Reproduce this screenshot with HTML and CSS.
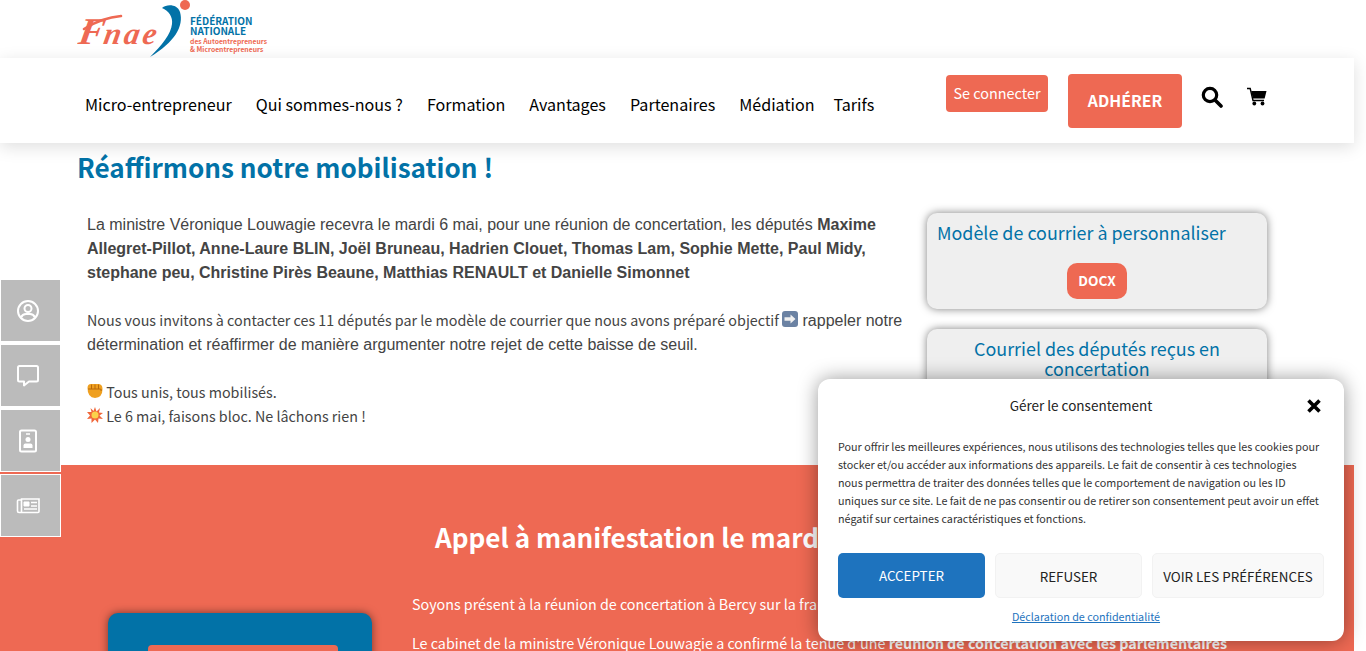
FILE: index.html
```html
<!DOCTYPE html>
<html lang="fr">
<head>
    <meta charset="UTF-8">
    <meta name="viewport" content="width=device-width, initial-scale=1.0">
    <title>Réaffirmons notre mobilisation !</title>
    <link rel="stylesheet" href="styles.css">
</head>
<body>
    <div class="page">
        <div class="logo-row">
            <svg class="logo" width="192" height="58" viewBox="0 0 192 58">
                <path d="M85 8 C90 4 100 4 103 12 C107 26 98 42 73 57 C85 45 94 34 95 24 C96 17 92 11 85 8 Z" fill="#0272a7"/>
                <circle cx="108" cy="5" r="5" fill="#ee6953"/>
                <path d="M7 29 C18 22 32 17 44 16" fill="none" stroke="#ee6953" stroke-width="2.6" stroke-linecap="round"/>
                <text class="logo-script" x="0" y="44" transform="translate(8 0) skewX(-10)">F<tspan class="logo-script-small">nae</tspan></text>
                <text class="logo-title" x="113" y="25">FÉDÉRATION</text>
                <text class="logo-title" x="113" y="35">NATIONALE</text>
                <text class="logo-sub" x="113" y="44">des Autoentrepreneurs</text>
                <text class="logo-sub" x="113" y="52">&amp; Microentrepreneurs</text>
            </svg>
        </div>

        <header class="header">
            <nav class="nav">
                <a>Micro-entrepreneur</a>
                <a>Qui sommes-nous ?</a>
                <a>Formation</a>
                <a>Avantages</a>
                <a>Partenaires</a>
                <a class="nav-tight">Médiation</a>
                <a>Tarifs</a>
            </nav>
            <a class="btn-login">Se connecter</a>
            <a class="btn-join">ADHÉRER</a>
            <svg class="icon-search" width="22" height="22" viewBox="0 0 22 22">
                <circle cx="9" cy="9" r="6.7" fill="none" stroke="#000" stroke-width="3.2"/>
                <path d="M14 14 L20 20" stroke="#000" stroke-width="3.6" stroke-linecap="round"/>
            </svg>
            <svg class="icon-cart" width="20" height="20" viewBox="0 0 20 20">
                <path d="M0 1.5 H3.2 L6 13.5 H17" fill="none" stroke="#000" stroke-width="1.4"/>
                <path d="M4.2 4 H19.5 L17.6 11.5 H5.8 Z" fill="#000"/>
                <circle cx="7.3" cy="16.5" r="1.9" fill="#000"/>
                <circle cx="15.5" cy="16.5" r="1.9" fill="#000"/>
            </svg>
        </header>

        <main class="intro">
            <h1>Réaffirmons notre mobilisation !</h1>
            <div class="intro-cols">
                <div class="intro-text">
                    <p>La ministre Véronique Louwagie recevra le mardi 6 mai, pour une réunion de concertation, les députés <b>Maxime Allegret-Pillot, Anne-Laure BLIN, Joël Bruneau, Hadrien Clouet, Thomas Lam, Sophie Mette, Paul Midy, stephane peu, Christine Pirès Beaune, Matthias RENAULT et Danielle Simonnet</b></p>
                    <p class="gap-top"><span class="source">Nous vous invitons à contacter ces 11 députés par le modèle de courrier que nous avons préparé objectif </span><svg class="emoji" width="16" height="16" viewBox="0 0 16 16"><rect width="16" height="16" rx="3" fill="#6b82a3"/><path d="M2.5 6.3 H8.5 V3.500 L13.5 8 L8.5 12.500 V9.700 H2.5 Z" fill="#f0f0f0"/></svg> rappeler notre détermination et réaffirmer de manière argumenter notre rejet de cette baisse de seuil.</p>
                    <p class="gap-top"><svg class="emoji" width="16" height="16" viewBox="0 0 16 16"><path d="M0.500 5 Q0.500 1 4 1 H11 Q15.500 1 15.500 6 Q15.500 14.500 8 15 Q0.500 14.500 0.500 5 Z" fill="#efa020"/><path d="M1 6 H13 Q15 6 14 8 M4.500 1.500 V6 M8 1.500 V6 M11.500 1.500 V6" stroke="#b8690c" stroke-width="1" fill="none"/></svg><span class="source"> Tous unis, tous mobilisés.</span><br>
                    <svg class="emoji" width="16" height="16" viewBox="0 0 16 16"><path d="M8 0 L9.500 4.500 L13 1 L12 5.500 L16 6 L12.500 8.500 L16 12 L11.500 11.500 L11 16 L8 12.500 L4.500 16 L4.500 11.500 L0 12 L3 8.500 L0 5 L4.500 5 L3.500 1 L6.500 4 Z" fill="#f0673a"/><circle cx="8" cy="8" r="3.500" fill="#fbd24b"/></svg><span class="source"> Le 6 mai, faisons bloc. Ne lâchons rien !</span></p>
                </div>
                <aside class="side">
                    <div class="card">
                        <h3 class="card-title-left">Modèle de courrier à personnaliser</h3>
                        <a class="btn-docx">DOCX</a>
                    </div>
                    <div class="card card-tall">
                        <h3>Courriel des députés reçus en concertation</h3>
                    </div>
                </aside>
            </div>
        </main>

        <section class="band">
            <h2>Appel à manifestation le mardi 6 mai</h2>
            <div class="band-cols">
                <div class="band-card"><div class="band-card-btn"></div></div>
                <div class="band-text">
                    <p>Soyons présent à la réunion de concertation à Bercy sur la franchise de TVA</p>
                    <p>Le cabinet de la ministre Véronique Louwagie a confirmé la tenue d'une <b>réunion de concertation avec les parlementaires</b></p>
                </div>
            </div>
        </section>

        <div class="side-tabs">
            <a class="tab"><svg width="24" height="24" viewBox="0 0 24 24" fill="none" stroke="#fff" stroke-width="2"><circle cx="12" cy="12" r="10"/><circle cx="12" cy="9.500" r="3.500"/><path d="M5 18.500 Q6.500 15 10 15 H14 Q17.500 15 19 18.500"/></svg></a>
            <a class="tab"><svg width="24" height="24" viewBox="0 0 24 24" fill="none" stroke="#fff" stroke-width="2" stroke-linejoin="round"><path d="M3.500 2 H20.500 Q22 2 22 3.500 V16 Q22 17.500 20.500 17.500 H13 L8 21.500 V17.500 H3.500 Q2 17.500 2 16 V3.500 Q2 2 3.500 2 Z"/></svg></a>
            <a class="tab"><svg width="24" height="24" viewBox="0 0 24 24"><rect x="4" y="1.500" width="16" height="21" rx="1.500" fill="none" stroke="#fff" stroke-width="2"/><path d="M10 5 H14" stroke="#fff" stroke-width="1.500"/><circle cx="12" cy="10.500" r="2.500" fill="#fff"/><path d="M7.500 19 V16.500 Q7.500 14.500 9.500 14.500 H14.500 Q16.500 14.500 16.500 16.500 V19 Z" fill="#fff"/></svg></a>
            <a class="tab tab-active"><svg width="24" height="24" viewBox="0 0 24 24" fill="none" stroke="#fff"><path d="M5 6 H2.500 Q1.500 6 1.500 7 V17 Q1.500 18.500 3 18.500 H22 Q23 18.500 23 17.500 V5 H5.500 V18" stroke-width="1.600"/><path d="M8 8 H13 V12 H8 Z" fill="#fff" stroke-width="1"/><path d="M15 8.500 H21 M15 12 H21 M8 15 H21" stroke-width="1.500"/></svg></a>
        </div>

        <div class="consent">
            <div class="consent-head">
                <span class="consent-title">Gérer le consentement</span>
                <svg class="consent-close" width="16" height="16" viewBox="0 0 16 16"><path d="M2.500 2.500 L13.500 13.500 M13.500 2.500 L2.500 13.500" stroke="#000" stroke-width="3.600"/></svg>
            </div>
            <p class="consent-text">Pour offrir les meilleures expériences, nous utilisons des technologies telles que les cookies pour stocker et/ou accéder aux informations des appareils. Le fait de consentir à ces technologies nous permettra de traiter des données telles que le comportement de navigation ou les ID uniques sur ce site. Le fait de ne pas consentir ou de retirer son consentement peut avoir un effet négatif sur certaines caractéristiques et fonctions.</p>
            <div class="consent-btns">
                <a class="cbtn cbtn-accept">ACCEPTER</a>
                <a class="cbtn cbtn-refuse">REFUSER</a>
                <a class="cbtn cbtn-prefs">VOIR LES PRÉFÉRENCES</a>
            </div>
            <a class="consent-link">Déclaration de confidentialité</a>
        </div>
    </div>
</body>
</html>
```

FILE: styles.css
```css
* {
    box-sizing: border-box;
}
html, body {
    margin: 0;
    height: 651px;
    overflow: hidden;
}
body {
    font-family: "Noto Sans CJK SC", "Noto Sans", sans-serif;
    background-color: #ffffff;
    color: #444;
}
.page {
    position: relative;
    height: 651px;
    overflow: hidden;
}
.logo-row {
    height: 58px;
    padding-left: 77px;
}
.logo {
    display: block;
}
.logo-script {
    font-family: "Liberation Serif", serif;
    font-style: italic;
    font-weight: 700;
    font-size: 38px;
    fill: #ee6953;
}
.logo-script-small {
    font-size: 31px;
    letter-spacing: 3px;
}
.logo-title {
    font-family: "Noto Sans CJK SC", sans-serif;
    font-weight: 700;
    font-size: 10px;
    fill: #0272a7;
}
.logo-sub {
    font-family: "Noto Sans CJK SC", sans-serif;
    font-weight: 700;
    font-size: 6.8px;
    fill: #ee6953;
}
.header {
    width: 1354px;
    height: 85px;
    background-color: #fff;
    box-shadow: 0 4px 16px rgba(0, 0, 0, 0.13);
    display: flex;
    align-items: flex-start;
    padding-left: 85px;
    position: relative;
}
.nav {
    display: flex;
    gap: 24px;
    padding-top: 34px;
    width: 861px;
    font-size: 16.1px;
    line-height: 24px;
    color: #000;
    white-space: nowrap;
}
.nav-tight {
    margin-right: -5px;
}
.btn-login {
    margin-top: 17px;
    width: 102px;
    height: 37px;
    background-color: #ee6953;
    color: #fff;
    border-radius: 4px;
    font-size: 14.4px;
    line-height: 35px;
    text-align: center;
}
.btn-join {
    margin-top: 16px;
    margin-left: 20px;
    width: 114px;
    height: 54px;
    background-color: #ee6953;
    color: #fff;
    border-radius: 4px;
    font-size: 15.8px;
    font-weight: 600;
    line-height: 54px;
    text-align: center;
}
.icon-search {
    margin-top: 28px;
    margin-left: 19px;
}
.icon-cart {
    margin-top: 29px;
    margin-left: 24px;
}
.intro {
    height: 322px;
    padding-left: 77px;
}
.intro h1 {
    margin: 0;
    padding-top: 6px;
    font-size: 26.1px;
    line-height: 36px;
    font-weight: 600;
    color: #0272a7;
}
.intro-cols {
    display: flex;
    padding-top: 28px;
}
.intro-text {
    width: 850px;
    padding: 0 0 0 10px;
    font-family: "Liberation Sans", Arial, sans-serif;
    font-size: 16px;
    line-height: 24px;
}
.intro-text p {
    margin: 0;
}
.gap-top {
    margin-top: 24px !important;
}
.source {
    font-family: "Noto Sans CJK SC", sans-serif;
    font-size: 14.32px;
    line-height: 1;
}
.emoji {
    vertical-align: -1px;
}
.side {
    width: 340px;
    display: flex;
    flex-direction: column;
    gap: 20px;
}
.card {
    width: 340px;
    height: 96px;
    background-color: #efefef;
    border-radius: 10px;
    box-shadow: 0 0 8px rgba(0, 0, 0, 0.5);
    padding: 9px 10px 10px;
    text-align: center;
}
.card-tall {
    height: 120px;
}
.card h3 {
    margin: 0;
    font-size: 17.9px;
    line-height: 20px;
    font-weight: 400;
    color: #0272a7;
}
.card-title-left {
    text-align: left;
}
.btn-docx {
    display: inline-block;
    margin-top: 21px;
    width: 60px;
    height: 36px;
    background-color: #ee6953;
    color: #fff;
    border-radius: 10px;
    font-size: 13.6px;
    font-weight: 700;
    line-height: 35px;
}
.band {
    width: 1354px;
    height: 186px;
    background-color: #ee6953;
    color: #fff;
}
.band h2 {
    margin: 0;
    padding: 54px 0 0 435px;
    font-size: 26.1px;
    line-height: 36px;
    font-weight: 600;
    white-space: nowrap;
}
.band-cols {
    display: flex;
    padding: 37px 0 0 108px;
}
.band-card {
    margin-top: 21px;
    width: 264px;
    height: 120px;
    padding: 32px 34px 0 40px;
    background-color: #0272a7;
    border-radius: 10px;
    box-shadow: 0 0 8px rgba(0, 0, 0, 0.5);
}
.band-card-btn {
    height: 40px;
    background-color: #ee6953;
    border-radius: 4px;
}
.band-text {
    margin-left: 40px;
    font-size: 14.32px;
    line-height: 24px;
    white-space: nowrap;
}
.band-text p {
    margin: 0 0 15px;
}
.band-text b {
    font-weight: 600;
}
.side-tabs {
    position: absolute;
    left: 0;
    top: 279px;
    display: flex;
    flex-direction: column;
    gap: 2px;
}
.tab {
    width: 61px;
    height: 63px;
    padding-right: 5px;
    background-color: #bbbbbb;
    border: 1px solid #fff;
    display: flex;
    align-items: center;
    justify-content: center;
}
.consent {
    position: absolute;
    left: 818px;
    top: 379px;
    width: 526px;
    height: 262px;
    background-color: #fff;
    border-radius: 12px;
    box-shadow: 0 0 20px rgba(0, 0, 0, 0.4);
    padding: 0 20px;
    color: #222;
}
.consent-head {
    height: 53px;
    display: flex;
    align-items: center;
    justify-content: center;
    position: relative;
}
.consent-title {
    font-size: 13.5px;
    line-height: 53px;
}
.consent-close {
    position: absolute;
    right: 2px;
    top: 19px;
}
.consent-text {
    margin: 6px 0 0;
    padding-right: 4px;
    font-size: 10.77px;
    line-height: 18px;
    color: #333;
}
.consent-btns {
    display: flex;
    gap: 10px;
    margin-top: 25px;
}
.cbtn {
    height: 45px;
    border-radius: 5px;
    font-size: 13.4px;
    line-height: 45px;
    text-align: center;
    white-space: nowrap;
}
.cbtn-accept {
    width: 147px;
    background-color: #1e73be;
    color: #fff;
}
.cbtn-refuse {
    width: 147px;
    background-color: #f9f9f9;
    border: 1px solid #f2f2f2;
    color: #222;
}
.cbtn-prefs {
    width: 172px;
    background-color: #f9f9f9;
    border: 1px solid #f2f2f2;
    color: #222;
}
.consent-link {
    display: block;
    margin-top: 10px;
    padding-left: 10px;
    font-size: 10.75px;
    line-height: 18px;
    text-align: center;
    color: #1e73be;
    text-decoration: underline;
}
```
